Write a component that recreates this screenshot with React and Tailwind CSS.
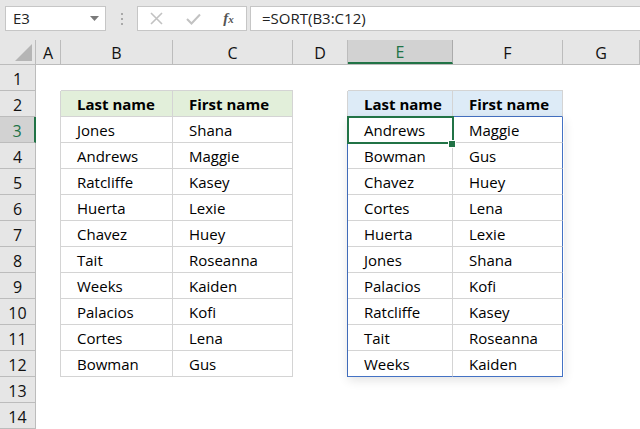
import React from "react";

const FONT = { fontFamily: '"Segoe UI", "Open Sans", "Noto Sans", sans-serif' };

const cols = [
  { k: "A", w: "w-[25px]" },
  { k: "B", w: "w-[112px]" },
  { k: "C", w: "w-[120px]" },
  { k: "D", w: "w-[55px]" },
  { k: "E", w: "w-[105px]" },
  { k: "F", w: "w-[110px]" },
  { k: "G", w: "w-[77px]" },
];

const left = [
  ["Jones", "Shana"],
  ["Andrews", "Maggie"],
  ["Ratcliffe", "Kasey"],
  ["Huerta", "Lexie"],
  ["Chavez", "Huey"],
  ["Tait", "Roseanna"],
  ["Weeks", "Kaiden"],
  ["Palacios", "Kofi"],
  ["Cortes", "Lena"],
  ["Bowman", "Gus"],
];

const right = [
  ["Andrews", "Maggie"],
  ["Bowman", "Gus"],
  ["Chavez", "Huey"],
  ["Cortes", "Lena"],
  ["Huerta", "Lexie"],
  ["Jones", "Shana"],
  ["Palacios", "Kofi"],
  ["Ratcliffe", "Kasey"],
  ["Tait", "Roseanna"],
  ["Weeks", "Kaiden"],
];

const GR = "border-r border-r-[#d4d4d4]";
const GB = "border-b border-b-[#d4d4d4]";
const BR = "border-r border-r-[#4472c4]";
const BB = "border-b border-b-[#4472c4]";

function cellStyle(r, k) {
  const c = [];
  if (k === "A") {
    if (r >= 2 && r <= 12) c.push(GR);
  } else if (k === "B" || k === "C") {
    if (r === 1) c.push(GB);
    if (r >= 2 && r <= 12) c.push(GR, GB);
    if (r === 2) c.push("bg-[#e2efda] font-bold");
  } else if (k === "D") {
    if (r === 2) c.push(GR);
    if (r >= 3 && r <= 12) c.push(BR);
  } else if (k === "E") {
    if (r === 1) c.push(GB);
    if (r === 2) c.push(GR, BB, "bg-[#ddebf7] font-bold");
    if (r >= 3 && r <= 11) c.push(GR, GB);
    if (r === 12) c.push(GR, BB);
  } else if (k === "F") {
    if (r === 1) c.push(GB);
    if (r === 2) c.push(GR, BB, "bg-[#ddebf7] font-bold");
    if (r >= 3 && r <= 11) c.push(BR, GB);
    if (r === 12) c.push(BR, BB);
  }
  return c.join(" ");
}

function cellText(r, k) {
  if (r === 2) {
    if (k === "B" || k === "E") return "Last name";
    if (k === "C" || k === "F") return "First name";
  }
  if (r >= 3 && r <= 12) {
    const i = r - 3;
    if (k === "B") return left[i][0];
    if (k === "C") return left[i][1];
    if (k === "E") return right[i][0];
    if (k === "F") return right[i][1];
  }
  return "";
}

function Toolbar() {
  return (
    <div className="h-[41px] bg-[#e6e6e6] flex items-start pt-[6px] pl-[5px]">
      <div className="w-[101px] h-[25px] bg-white border border-[#c6c6c6] flex items-center pl-[7px] pr-[6px] text-[15px] text-[#222]">
        <span className="flex-1">E3</span>
        <svg width="9" height="5" viewBox="0 0 9 5">
          <path d="M0 0 H9 L4.5 5 Z" fill="#7a7a7a" />
        </svg>
      </div>
      <div className="w-[31px] h-[25px] flex flex-col items-center justify-center gap-[3px]">
        <div className="w-[2px] h-[2px] bg-[#a9a9a9]" />
        <div className="w-[2px] h-[2px] bg-[#a9a9a9]" />
        <div className="w-[2px] h-[2px] bg-[#a9a9a9]" />
      </div>
      <div className="w-[110px] h-[25px] bg-white border border-[#c6c6c6] flex items-center">
        <div className="w-[37px] flex justify-center">
          <svg width="13" height="13" viewBox="0 0 13 13">
            <path d="M1 1 L12 12 M12 1 L1 12" stroke="#c2c2c2" strokeWidth="1.6" fill="none" />
          </svg>
        </div>
        <div className="w-[36px] flex justify-center">
          <svg width="15" height="12" viewBox="0 0 15 12">
            <path d="M1 6 L5.5 10.5 L14 1.5" stroke="#c2c2c2" strokeWidth="2" fill="none" />
          </svg>
        </div>
        <div
          className="w-[35px] flex justify-center items-baseline text-[#555] italic"
          style={{ fontFamily: '"Liberation Serif", serif' }}
        >
          <span className="text-[15px] font-bold">f</span>
          <span className="text-[11px] font-bold">x</span>
        </div>
      </div>
      <div className="flex-1 ml-[3px] h-[25px] bg-white border border-[#c6c6c6] border-r-0 flex items-center pl-[11px] text-[15px] text-[#222]">
        =SORT(B3:C12)
      </div>
    </div>
  );
}

function HeaderRow() {
  return (
    <div className="h-[25px] flex bg-[#e6e6e6] border-b border-b-[#bcbcbc]">
      <div className="w-[36px] h-full border-r border-r-[#bcbcbc] flex items-end justify-end pr-[3px] pb-[3px]">
        <svg width="17" height="17" viewBox="0 0 17 17">
          <path d="M17 0 L17 17 L0 17 Z" fill="#b5b5b5" />
        </svg>
      </div>
      {cols.map((c) =>
        c.k === "E" ? (
          <div
            key={c.k}
            className={`${c.w} h-full bg-[#d2d2d2] border-r border-r-[#ababab] border-b-2 border-b-[#217346] flex items-center justify-center pt-[1px] text-[#217346] text-[16px]`}
          >
            {c.k}
          </div>
        ) : (
          <div
            key={c.k}
            className={`${c.w} h-full border-r border-r-[#bcbcbc] flex items-center justify-center pt-[1px] text-[#111] text-[16px]`}
          >
            {c.k}
          </div>
        )
      )}
    </div>
  );
}

export default function App() {
  const rows = Array.from({ length: 14 }, (_, i) => i + 1);
  return (
    <div className="w-[640px] h-[429px] overflow-hidden bg-white flex flex-col" style={FONT}>
      <Toolbar />
      <HeaderRow />
      <div className="relative flex flex-col">
        {rows.map((r) => (
          <div key={r} className="h-[26px] flex">
            {r === 3 ? (
              <div className="w-[36px] h-full bg-[#d2d2d2] border-b border-b-[#bcbcbc] border-r-2 border-r-[#217346] flex items-center justify-center pt-[2px] text-[#217346] text-[16px]">
                {r}
              </div>
            ) : (
              <div className="w-[36px] h-full bg-[#e6e6e6] border-b border-b-[#bcbcbc] border-r border-r-[#bcbcbc] flex items-center justify-center pt-[2px] text-[#111] text-[16px]">
                {r}
              </div>
            )}
            {cols.map((c) => (
              <div
                key={c.k}
                className={`${c.w} h-full flex items-center pl-[16px] pt-[2px] text-[15px] text-black whitespace-nowrap ${cellStyle(r, c.k)}`}
              >
                {cellText(r, c.k)}
              </div>
            ))}
          </div>
        ))}
        <div className="absolute left-[348px] top-[52px] w-[216px] h-[260px] shadow-[0_3px_10px_rgba(0,0,0,0.12)] pointer-events-none" />
        <div className="absolute left-[347px] top-[51px] w-[107px] h-[28px] border-2 border-[#217346] pointer-events-none" />
        <div className="absolute left-[448px] top-[75px] w-[8px] h-[8px] bg-[#217346] border border-white pointer-events-none" />
      </div>
    </div>
  );
}
